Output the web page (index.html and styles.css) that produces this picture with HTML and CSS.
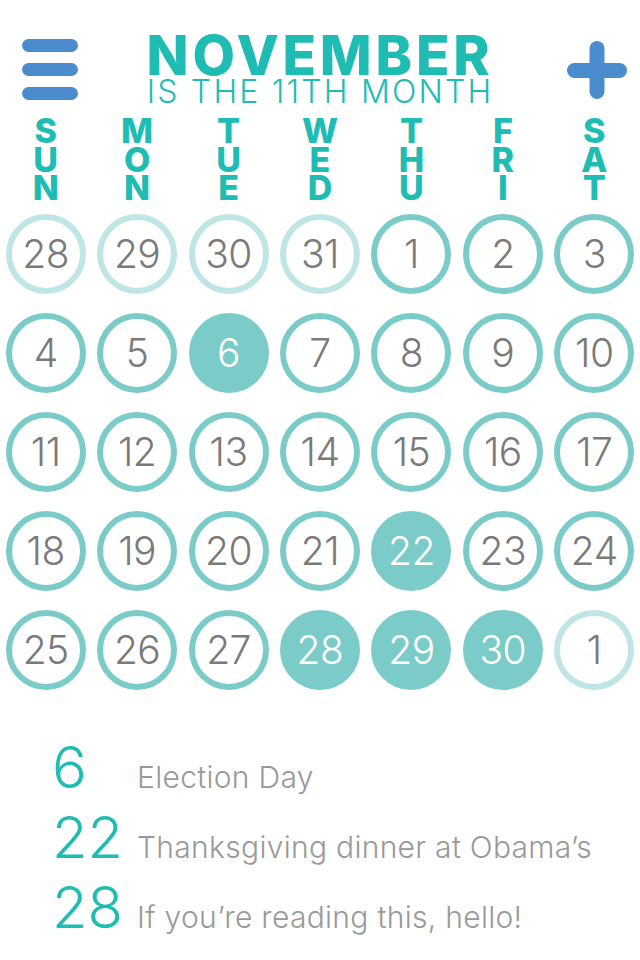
FILE: index.html
```html
<!DOCTYPE html>
<html>
<head>
<meta charset="utf-8">
<link rel="stylesheet" href="styles.css">
</head>
<body>
<div class="app">
  <header class="header">
    <div class="menu" aria-label="Menu">
      <span class="bar"></span><span class="bar"></span><span class="bar"></span>
    </div>
    <div class="title">
      <h1 class="month">NOVEMBER</h1>
      <p class="subtitle">IS THE 11TH MONTH</p>
    </div>
    <svg class="plus" width="60" height="60" viewBox="0 0 60 60" aria-label="Add">
      <rect x="22.5" y="0" width="15" height="58" rx="7.5" fill="#4a8ccd"/>
      <rect x="0" y="22" width="60" height="15" rx="7.5" fill="#4a8ccd"/>
    </svg>
  </header>

  <div class="weekdays">
    <div class="wd">S<br>U<br>N</div>
    <div class="wd">M<br>O<br>N</div>
    <div class="wd">T<br>U<br>E</div>
    <div class="wd">W<br>E<br>D</div>
    <div class="wd">T<br>H<br>U</div>
    <div class="wd">F<br>R<br>I</div>
    <div class="wd">S<br>A<br>T</div>
  </div>

  <div class="calendar">
    <div class="day other">28</div>
    <div class="day other">29</div>
    <div class="day other">30</div>
    <div class="day other">31</div>
    <div class="day">1</div>
    <div class="day">2</div>
    <div class="day">3</div>

    <div class="day">4</div>
    <div class="day">5</div>
    <div class="day event">6</div>
    <div class="day">7</div>
    <div class="day">8</div>
    <div class="day">9</div>
    <div class="day">10</div>

    <div class="day">11</div>
    <div class="day">12</div>
    <div class="day">13</div>
    <div class="day">14</div>
    <div class="day">15</div>
    <div class="day">16</div>
    <div class="day">17</div>

    <div class="day">18</div>
    <div class="day">19</div>
    <div class="day">20</div>
    <div class="day">21</div>
    <div class="day event">22</div>
    <div class="day">23</div>
    <div class="day">24</div>

    <div class="day">25</div>
    <div class="day">26</div>
    <div class="day">27</div>
    <div class="day event">28</div>
    <div class="day event">29</div>
    <div class="day event">30</div>
    <div class="day other">1</div>
  </div>

  <ul class="events">
    <li class="ev"><span class="ev-num">6</span><span class="ev-text">Election Day</span></li>
    <li class="ev"><span class="ev-num">22</span><span class="ev-text">Thanksgiving dinner at Obama’s</span></li>
    <li class="ev"><span class="ev-num">28</span><span class="ev-text">If you’re reading this, hello!</span></li>
  </ul>
</div>
</body>
</html>
```

FILE: styles.css
```css
* { box-sizing: border-box; }

html, body {
  margin: 0;
  padding: 0;
  background: #ffffff;
}

body {
  font-family: Inter, "Noto Sans", sans-serif;
  width: 640px;
  height: 960px;
  overflow: hidden;
}

.header {
  display: grid;
  grid-template-columns: 1fr auto 1fr;
  align-items: start;
}

.menu {
  justify-self: start;
  margin-left: 22px;
  margin-top: 39px;
  display: flex;
  flex-direction: column;
  gap: 11px;
}

.bar {
  display: block;
  width: 56px;
  height: 13px;
  border-radius: 7px;
  background: #4a8ccd;
}

.plus {
  justify-self: end;
  margin-right: 13px;
  margin-top: 41px;
  display: block;
}

.title {
  margin-top: 32px;
  text-align: center;
  color: #1ebcb2;
}

.month {
  margin: 0;
  font-size: 55px;
  line-height: 46px;
  font-weight: 800;
  letter-spacing: 3.8px;
}

.subtitle {
  margin: 0;
  font-size: 32px;
  line-height: 28px;
  font-weight: 300;
  letter-spacing: 2.2px;
}

.weekdays {
  margin-top: 11px;
  display: grid;
  grid-template-columns: repeat(7, 1fr);
}

.wd {
  text-align: center;
  color: #1ebcb2;
  font-size: 34px;
  line-height: 28.5px;
  font-weight: 800;
}

.calendar {
  margin-top: 11px;
  display: grid;
  grid-template-columns: repeat(7, 1fr);
  row-gap: 19px;
  justify-items: center;
}

.day {
  width: 80px;
  height: 80px;
  border-radius: 50%;
  border: 6px solid #7bccc8;
  display: flex;
  align-items: center;
  justify-content: center;
  font-size: 39px;
  font-weight: 300;
  color: #7a7a7a;
  letter-spacing: -0.5px;
}

.day.other {
  border-color: #bfe6e4;
}

.day.event {
  background: #7bccc8;
  color: #ffffff;
}

.events {
  list-style: none;
  margin: 42px 0 0 0;
  padding: 0 0 0 52px;
}

.ev {
  display: flex;
  align-items: baseline;
  height: 70px;
  line-height: 70px;
}

.ev-num {
  width: 85px;
  font-size: 58px;
  font-weight: 300;
  color: #1ebcb2;
}

.ev-text {
  font-size: 30px;
  font-weight: 300;
  color: #999999;
  letter-spacing: 0.3px;
}
```
